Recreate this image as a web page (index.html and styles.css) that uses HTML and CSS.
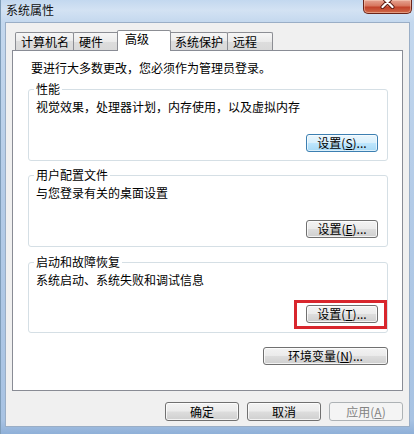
FILE: index.html
```html
<!DOCTYPE html>
<html lang="zh-CN">
<head>
<meta charset="utf-8">
<title>系统属性</title>
<link rel="stylesheet" href="styles.css">
</head>
<body>
<div class="window">
  <div class="titlebar">
    <span class="title">系统属性</span>
    <div class="close">
      <svg width="47" height="13" viewBox="0 0 47 13" aria-hidden="true">
        <path d="M18.5 -3 L28.5 7 M28.5 -3 L18.5 7" stroke="#5a1a12" stroke-width="4" stroke-linecap="round"/>
        <path d="M18.5 -3 L28.5 7 M28.5 -3 L18.5 7" stroke="#ffffff" stroke-width="2.2" stroke-linecap="round"/>
      </svg>
    </div>
  </div>
  <div class="client">
    <div class="tabs">
      <div class="tab">计算机名</div>
      <div class="tab">硬件</div>
      <div class="tab tab-active">高级</div>
      <div class="tab">系统保护</div>
      <div class="tab">远程</div>
    </div>
    <div class="panel">
      <p class="intro">要进行大多数更改，您必须作为管理员登录。</p>
      <fieldset class="group group-perf">
        <legend>性能</legend>
        <p class="desc">视觉效果，处理器计划，内存使用，以及虚拟内存</p>
        <div class="group-actions"><button class="btn btn-default">设置(<u>S</u>)...</button></div>
      </fieldset>
      <fieldset class="group group-profile">
        <legend>用户配置文件</legend>
        <p class="desc">与您登录有关的桌面设置</p>
        <div class="group-actions"><button class="btn">设置(<u>E</u>)...</button></div>
      </fieldset>
      <fieldset class="group group-startup">
        <legend>启动和故障恢复</legend>
        <p class="desc">系统启动、系统失败和调试信息</p>
        <div class="group-actions"><span class="highlight"><button class="btn">设置(<u>T</u>)...</button></span></div>
      </fieldset>
      <div class="env-row"><button class="btn btn-env">环境变量(<u>N</u>)...</button></div>
    </div>
    <div class="actions">
      <button class="btn btn-dialog">确定</button>
      <button class="btn btn-dialog">取消</button>
      <button class="btn btn-dialog btn-disabled" disabled>应用(<u>A</u>)</button>
    </div>
  </div>
</div>
</body>
</html>
```
FILE: styles.css
```css
* { box-sizing: border-box; }

body {
  margin: 0;
  font-family: "Noto Sans CJK SC", "Noto Sans", sans-serif;
  font-size: 12px;
  color: #000;
}

.window {
  width: 414px;
  height: 434px;
  overflow: hidden;
  background: linear-gradient(to bottom, #c3d8ef 0px, #d3e2f3 10px, #c4d8ee 22px, #b3cbe7 200px, #a8c3e3 420px, #8fb0d8 434px);
  border-left: 1px solid #7f9db9;
}

.titlebar {
  height: 22px;
  display: flex;
  justify-content: space-between;
  align-items: flex-start;
}

.title {
  padding: 3px 0 0 5px;
  line-height: 14px;
  font-size: 12px;
  color: #111;
}

.close {
  width: 49px;
  height: 14px;
  margin-right: 2px;
  border: 1px solid #6b2419;
  border-top: none;
  border-radius: 0 0 5px 5px;
  background: linear-gradient(to bottom, #e6a493 0%, #d7765e 45%, #c2422a 55%, #cf6a4a 100%);
  box-shadow: inset 0 0 0 1px rgba(255, 220, 200, 0.45);
  display: flex;
  justify-content: center;
}

.close svg { display: block; }

.client {
  margin: 0 4px 0 4px;
  height: 405px;
  background: #f0f0f0;
  border: 1px solid #9aaec6;
}

.tabs {
  height: 18px;
  margin-top: 9px;
  padding-left: 9px;
  display: flex;
  align-items: flex-end;
}

.tab {
  height: 18px;
  min-width: 46px;
  padding: 0 4px 0 5px;
  margin-left: -1px;
  line-height: 17px;
  white-space: nowrap;
  border: 1px solid #8c8e94;
  border-bottom: none;
  border-radius: 2px 2px 0 0;
  background: linear-gradient(to bottom, #f6f6f6 0%, #ebebeb 50%, #dddddd 50%, #d9d9d9 100%);
}

.tab:first-child { margin-left: 0; }

.tab-active {
  position: relative;
  z-index: 1;
  height: 21px;
  min-width: 54px;
  padding-left: 7px;
  margin-bottom: -1px;
  margin-left: -2px;
  margin-right: -1px;
  line-height: 15px;
  background: #ffffff;
}

.panel {
  margin: 0 6px;
  height: 341px;
  background: #ffffff;
  border: 1px solid #898c95;
}

.intro {
  margin: 0;
  padding: 10px 0 0 18px;
  line-height: 14px;
}

.group {
  min-width: 0;
  margin: 7px 14px 0 15px;
  padding: 0 9px 8px 7px;
  border: 1px solid #d5dfe5;
  border-radius: 3px;
}

.group-startup { margin-top: 8px; padding-bottom: 9px; }

.group legend {
  margin-left: -2px;
  padding: 0 2px;
  line-height: 14px;
}

.desc {
  margin: 4px 0 0;
  line-height: 14px;
}

.group-actions {
  display: flex;
  justify-content: flex-end;
  margin-top: 20px;
}

.group-startup .group-actions { margin-top: 18px; }

.highlight {
  position: relative;
  display: inline-flex;
}

.highlight::after {
  content: "";
  position: absolute;
  top: -5px;
  bottom: -6px;
  left: -12px;
  right: -9px;
  border: 3px solid #d8262d;
}

.btn {
  height: 18px;
  width: 72px;
  padding: 0;
  font-family: inherit;
  font-size: 12px;
  line-height: 14px;
  color: #000;
  border: 1px solid #707070;
  border-radius: 3px;
  background: linear-gradient(to bottom, #f3f3f3 0%, #ebebeb 48%, #dddddd 52%, #cfcfcf 100%);
  box-shadow: inset 0 0 0 1px rgba(255, 255, 255, 0.75);
  white-space: nowrap;
}

.btn u { text-underline-offset: 1px; }

.btn-default {
  border-color: #3c7fb1;
  background: linear-gradient(to bottom, #eaf6fd 0%, #d9f0fc 48%, #bee6fd 52%, #a7d9f5 100%);
  box-shadow: inset 0 0 0 1px rgba(255, 255, 255, 0.6);
}

.env-row {
  display: flex;
  justify-content: flex-end;
  margin: 14px 14px 0 0;
}

.btn-env { width: 125px; }

.actions {
  display: flex;
  justify-content: flex-end;
  gap: 8px;
  margin-top: 11px;
  padding-right: 6px;
}

.btn-dialog {
  width: 74px;
  height: 19px;
}

.btn-disabled {
  color: #838383;
  border-color: #adb2b5;
  background: #f4f4f4;
  box-shadow: none;
}
```
